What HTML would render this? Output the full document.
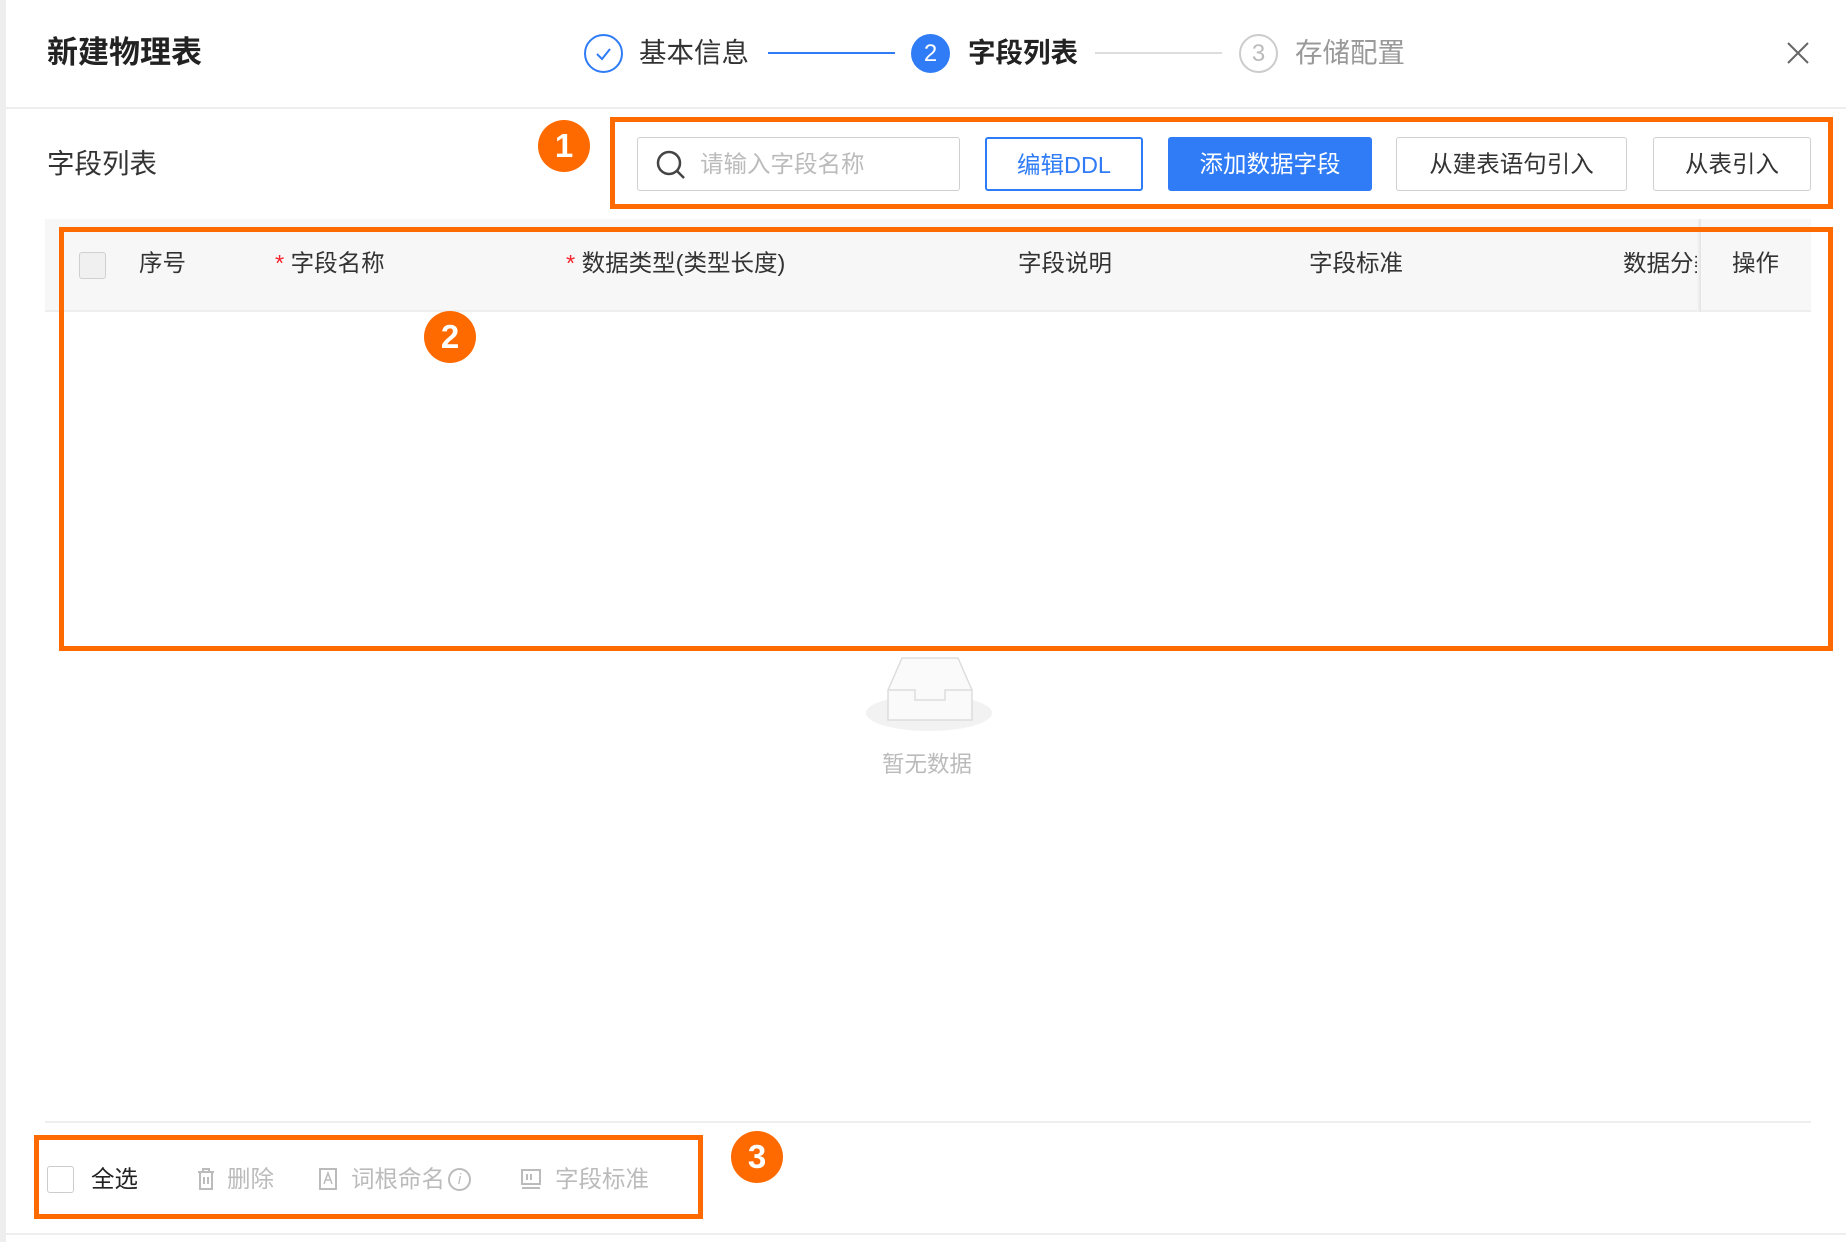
<!DOCTYPE html>
<html><head><meta charset="utf-8"><style>
*{margin:0;padding:0;box-sizing:border-box}
body{width:1846px;height:1242px;background:#fff;position:relative;overflow:hidden;font-family:"Liberation Sans","Noto Sans CJK SC",sans-serif;color:#333}
.a{position:absolute}
.t{position:absolute;white-space:nowrap;line-height:1}
.ob{position:absolute;border:5px solid #ff6a00}
.oc{position:absolute;width:52px;height:52px;border-radius:50%;background:#ff6a00;color:#fff;font-size:33px;text-align:center;line-height:52px;font-weight:bold}
.btn{position:absolute;top:137px;height:54px;border:1px solid #d0d0d0;border-radius:3px;font-size:23.5px;text-align:center;line-height:52px;color:#333;background:#fff}
.h{position:absolute;top:252px;font-size:23.5px;line-height:1;white-space:nowrap;color:#333}
.r{color:#f5222d}
</style></head><body>
<div class="a" style="left:0;top:0;width:6px;height:1242px;background:#eee"></div>
<div class="a" style="left:6px;top:107px;width:1840px;height:2px;background:#eee"></div>
<div class="t" style="left:47px;top:37px;font-size:31px;font-weight:bold;color:#222">新建物理表</div>
<div class="a" style="left:584px;top:34px;width:39px;height:39px;border:2px solid #2f7cf6;border-radius:50%"></div>
<svg class="a" style="left:591px;top:41px" width="25" height="25"><path d="M6 13 L11 18 L19 8" fill="none" stroke="#2f7cf6" stroke-width="2"/></svg>
<div class="t" style="left:639px;top:39px;font-size:27.5px;color:#333">基本信息</div>
<div class="a" style="left:768px;top:52px;width:127px;height:2px;background:#2f7cf6"></div>
<div class="a" style="left:911px;top:34px;width:39px;height:39px;background:#2f7cf6;border-radius:50%;color:#fff;font-size:24px;text-align:center;line-height:39px">2</div>
<div class="t" style="left:968px;top:39px;font-size:27.5px;font-weight:bold;color:#222">字段列表</div>
<div class="a" style="left:1095px;top:52px;width:127px;height:2px;background:#ddd"></div>
<div class="a" style="left:1239px;top:34px;width:39px;height:39px;border:2px solid #ccc;border-radius:50%;color:#bbb;font-size:24px;text-align:center;line-height:35px">3</div>
<div class="t" style="left:1295px;top:39px;font-size:27.5px;color:#999">存储配置</div>
<svg class="a" style="left:1786px;top:41px" width="24" height="24"><path d="M2 2L22 22M22 2L2 22" stroke="#666" stroke-width="2"/></svg>

<div class="t" style="left:47px;top:150px;font-size:27.5px">字段列表</div>
<div class="oc" style="left:538px;top:120px">1</div>
<div class="ob" style="left:610px;top:117px;width:1223px;height:92px"></div>
<div class="btn" style="left:637px;width:323px;text-align:left;padding-left:62px;color:#bbb">请输入字段名称</div>
<svg class="a" style="left:655px;top:149px" width="32" height="32"><circle cx="14" cy="14" r="11" fill="none" stroke="#444" stroke-width="2.5"/><path d="M22 22L29 29" stroke="#444" stroke-width="2.5"/></svg>
<div class="btn" style="left:985px;width:158px;border:2px solid #2f7cf6;color:#2f7cf6">编辑DDL</div>
<div class="btn" style="left:1168px;width:204px;border-color:#2f7cf6;background:#2f7cf6;color:#fff">添加数据字段</div>
<div class="btn" style="left:1396px;width:231px">从建表语句引入</div>
<div class="btn" style="left:1653px;width:158px">从表引入</div>

<div class="a" style="left:45px;top:219px;width:1766px;height:93px;background:#f7f7f7;border-bottom:2px solid #eee"></div>
<div class="a" style="left:1697px;top:219px;width:4px;height:93px;background:linear-gradient(90deg,#f7f7f7,#e2e2e2)"></div>
<div class="a" style="left:79px;top:252px;width:27px;height:27px;border:1px solid #d0d0d0;border-radius:3px;background:#f0f0f0"></div>
<div class="h" style="left:139px">序号</div>
<div class="h" style="left:275px"><span class="r">*</span> 字段名称</div>
<div class="h" style="left:566px"><span class="r">*</span> 数据类型(类型长度)</div>
<div class="h" style="left:1018px">字段说明</div>
<div class="h" style="left:1309px">字段标准</div>
<div class="h" style="left:1623px;width:74px;overflow:hidden">数据分类</div>
<div class="h" style="left:1732px">操作</div>
<div class="ob" style="left:59px;top:227px;width:1774px;height:424px"></div>
<div class="oc" style="left:424px;top:311px">2</div>

<div class="a" style="left:866px;top:695px;width:126px;height:36px;border-radius:50%;background:#f2f2f2"></div>
<svg class="a" style="left:880px;top:650px" width="100" height="75"><path d="M8 40 L22 8 L78 8 L92 40 V70 H8 Z" fill="#fafafa" stroke="#ddd" stroke-width="1.5"/><path d="M8 40 H35 V50 H65 V40 H92" fill="none" stroke="#ddd" stroke-width="1.5"/></svg>
<div class="t" style="left:882px;top:754px;font-size:22.5px;color:#bbb">暂无数据</div>

<div class="a" style="left:45px;top:1121px;width:1766px;height:2px;background:#eee"></div>
<div class="ob" style="left:34px;top:1135px;width:669px;height:84px"></div>
<div class="a" style="left:47px;top:1166px;width:27px;height:27px;border:1px solid #ccc;border-radius:3px"></div>
<div class="t" style="left:91px;top:1168px;font-size:23.5px;color:#222">全选</div>
<svg class="a" style="left:196px;top:1168px" width="20" height="22"><path d="M2 4H18M7 4V1H13V4M4 4V21H16V4M8 9V16M12 9V16" fill="none" stroke="#bbb" stroke-width="2"/></svg>
<div class="t" style="left:227px;top:1168px;font-size:23.5px;color:#bbb">删除</div>
<svg class="a" style="left:318px;top:1168px" width="20" height="22"><rect x="2" y="1" width="16" height="20" fill="none" stroke="#bbb" stroke-width="2"/><path d="M6 16L10 5L14 16M7 12H13" fill="none" stroke="#bbb" stroke-width="1.5"/></svg>
<div class="t" style="left:351px;top:1168px;font-size:23.5px;color:#bbb">词根命名</div>
<div class="a" style="left:448px;top:1168px;width:23px;height:23px;border:2px solid #bbb;border-radius:50%;color:#bbb;font-size:15px;text-align:center;line-height:19px;font-style:italic">i</div>
<svg class="a" style="left:520px;top:1168px" width="22" height="22"><rect x="2" y="2" width="18" height="14" fill="none" stroke="#bbb" stroke-width="2"/><path d="M2 20H20M7 6V12M11 6V12" stroke="#bbb" stroke-width="2"/></svg>
<div class="t" style="left:555px;top:1168px;font-size:23.5px;color:#bbb">字段标准</div>
<div class="oc" style="left:731px;top:1131px">3</div>
<div class="a" style="left:6px;top:1233px;width:1840px;height:2px;background:#eee"></div>
</body></html>
